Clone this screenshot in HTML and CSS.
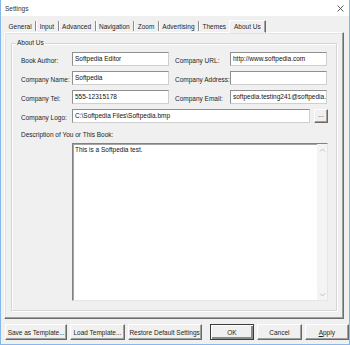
FILE: index.html
```html
<!DOCTYPE html>
<html lang="en">
<head>
    <meta charset="UTF-8">
    <title>Settings</title>
    <link rel="stylesheet" href="styles.css">
</head>
<body>
    <div class="window">
        <div class="titlebar">
            <span class="title">Settings</span>
            <svg class="close" width="7" height="7" viewBox="0 0 7 7">
                <path d="M0.5 0.5 L6.5 6.5 M6.5 0.5 L0.5 6.5" stroke="#4a4a4a" stroke-width="0.9" fill="none"/>
            </svg>
        </div>

        <div class="client">
            <div class="tabs">
                <span class="tab">General</span>
                <span class="tab">Input</span>
                <span class="tab">Advanced</span>
                <span class="tab">Navigation</span>
                <span class="tab">Zoom</span>
                <span class="tab">Advertising</span>
                <span class="tab">Themes</span>
                <span class="tab active">About Us</span>
            </div>

            <div class="panel">
                <fieldset class="group">
                    <legend>About Us</legend>

                    <div class="fields">
                        <label>Book Author:</label>
                        <div class="edit">Softpedia Editor</div>
                        <label class="right-label">Company URL:</label>
                        <div class="edit">http://www.softpedia.com</div>

                        <label>Company Name:</label>
                        <div class="edit">Softpedia</div>
                        <label class="right-label">Company Address:</label>
                        <div class="edit"></div>

                        <label>Company Tel:</label>
                        <div class="edit">555-12315178</div>
                        <label class="right-label">Company Email:</label>
                        <div class="edit">softpedia.testing241@softpedia.com</div>

                        <label>Company Logo:</label>
                        <div class="logo-row">
                            <div class="edit">C:\Softpedia Files\Softpedia.bmp</div>
                            <button class="browse">...</button>
                        </div>
                    </div>

                    <div class="desc-label">Description of You or This Book:</div>
                    <div class="memo">
                        <div class="memo-text">This is a Softpedia test.</div>
                        <div class="vscroll">
                            <svg width="7" height="5" viewBox="0 0 7 5">
                                <path d="M1 3.5 L3.5 1 L6 3.5" stroke="#c2c2c2" stroke-width="1" fill="none"/>
                            </svg>
                            <svg width="7" height="5" viewBox="0 0 7 5">
                                <path d="M1 1.5 L3.5 4 L6 1.5" stroke="#c2c2c2" stroke-width="1" fill="none"/>
                            </svg>
                        </div>
                    </div>
                </fieldset>
            </div>

            <div class="buttons">
                <button class="btn save">Save as Template...</button>
                <button class="btn load">Load Template...</button>
                <button class="btn restore">Restore Default Settings</button>
                <button class="btn dlg default">OK</button>
                <button class="btn dlg">Cancel</button>
                <button class="btn dlg"><u>A</u>pply</button>
            </div>
        </div>
    </div>
</body>
</html>
```

FILE: styles.css
```css
body {
    margin: 0;
    font-family: "Liberation Sans", Arial, sans-serif;
    font-size: 6.5px;
    color: #1e1e1e;
    background: #fff;
}

.window {
    width: 350px;
    height: 345px;
    box-sizing: border-box;
    border: 1px solid #86b9e8;
    border-top: none;
    background: #f0f0f0;
    display: flex;
    flex-direction: column;
}

.titlebar {
    height: 16px;
    background: #fff;
    display: flex;
    align-items: center;
    justify-content: space-between;
    padding: 0 5px 0 4px;
    color: #333;
}

.client {
    flex: 1;
    display: flex;
    flex-direction: column;
    padding: 3px 0 4px 3px;
}

/* tab strip */
.tabs {
    display: flex;
    height: 13px;
    padding-left: 1px;
    position: relative;
    z-index: 1;
}

.tab {
    display: flex;
    align-items: center;
    padding: 1px 3.5px 0;
    margin: 2px 0 1px;
    border-right: 1px solid #8c8c8c;
    box-shadow: 1px 0 0 #fff;
}

.tab:has(+ .active) {
    border-right: none;
    box-shadow: none;
    padding-right: 3px;
}

.tab.active {
    margin: 1px 0 -1px;
    padding: 0 4px 1px;
    border: 1px solid;
    border-color: #fff #6d6d6d transparent #fff;
    box-shadow: inset -1px 0 0 #a0a0a0;
    background: #f0f0f0;
}

.panel {
    flex: 1;
    display: flex;
    margin-right: 5px;
    padding: 6px 6px 7px 6px;
    border: 1px solid;
    border-color: #fff #6d6d6d #6d6d6d #fff;
    box-shadow: inset -1px -1px 0 #a0a0a0, inset 1px 1px 0 #e3e3e3;
}

/* group box */
.group {
    flex: 1;
    margin: 0;
    padding: 5px 8px 9px 9px;
    border: 1px solid #d5d5d5;
    box-shadow: 1px 1px 0 #fff, inset 1px 1px 0 #fff;
    display: flex;
    flex-direction: column;
    min-width: 0;
}

.group legend {
    line-height: 8px;
    padding: 0 1px;
    margin-left: -5px;
    color: #222;
}

.fields {
    display: grid;
    grid-template-columns: 51px 97px 61px 97px;
    grid-auto-rows: 14px;
    row-gap: 5px;
}

.fields label {
    display: flex;
    align-items: center;
    padding-top: 2px;
    white-space: nowrap;
}

.fields .right-label {
    padding-left: 6px;
}

.edit {
    box-sizing: border-box;
    height: 14px;
    background: #fff;
    border: 1px solid;
    border-color: #8f8f8f #cfcfcf #cfcfcf #8f8f8f;
    padding: 0 2px;
    line-height: 12px;
    white-space: nowrap;
    overflow: hidden;
    color: #111;
}

.logo-row {
    grid-column: 2 / 5;
    display: flex;
    gap: 4px;
}

.logo-row .edit {
    flex: 1;
}

.browse {
    width: 14px;
    height: 14px;
    padding: 0 0 2px;
    margin: 0 -1px 0 0;
    font: inherit;
    line-height: 10px;
    background: #f0f0f0;
    border: 1px solid;
    border-color: #fff #696969 #696969 #fff;
    box-shadow: inset -1px -1px 0 #a0a0a0;
    color: #333;
}

.desc-label {
    margin-top: 6px;
    line-height: 12px;
}

.memo {
    flex: 1;
    margin: 2px 0 0 51px;
    display: flex;
    background: #fff;
    border: 1px solid;
    border-color: #828282 #e6e6e6 #e6e6e6 #828282;
    box-shadow: inset 1px 1px 0 #a5a5a5;
}

.memo-text {
    flex: 1;
    padding: 2px 2px 0 2px;
    color: #111;
}

.vscroll {
    width: 10px;
    background: #f4f4f4;
    display: flex;
    flex-direction: column;
    justify-content: space-between;
    align-items: center;
    padding: 4px 0 3px;
}

/* bottom buttons */
.buttons {
    display: flex;
    height: 16px;
    margin: 5px 0 0 1px;
    gap: 3px;
}

.btn {
    height: 16px;
    padding: 0;
    font: inherit;
    color: #1e1e1e;
    background: #f0f0f0;
    border: 1px solid;
    border-color: #fff #696969 #696969 #fff;
    box-shadow: inset -1px -1px 0 #a0a0a0;
    white-space: nowrap;
}

.save { width: 63px; }
.load { width: 55px; }
.restore { width: 75px; margin-right: 5px; }
.dlg { width: 45px; }

.default {
    outline: 1px solid #3c3c3c;
    outline-offset: -1px;
    border-color: #3c3c3c;
    box-shadow: inset 1px 1px 0 #fff, inset -2px -2px 0 #8a8a8a;
}
```
